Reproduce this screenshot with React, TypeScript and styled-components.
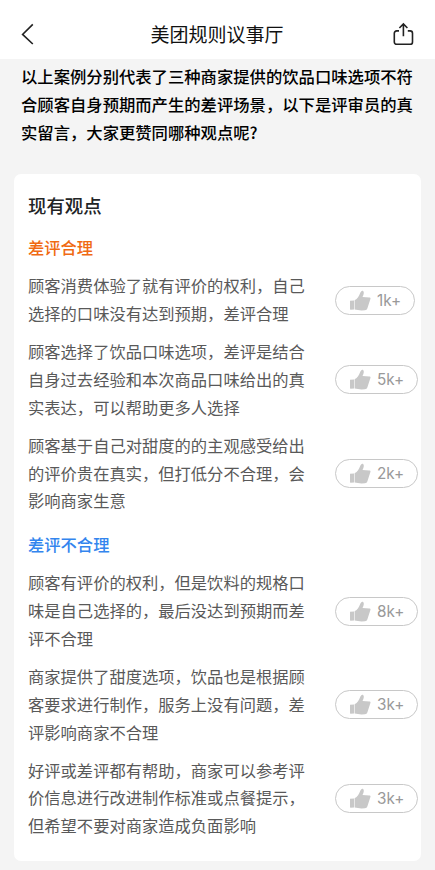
import React from "react";
import styled, { createGlobalStyle } from "styled-components";

const GlobalStyle = createGlobalStyle`
  * { box-sizing: border-box; }
  body {
    margin: 0;
    background: #f4f4f4;
    font-family: "Noto Sans CJK SC", sans-serif;
    overflow: hidden;
  }
  h1, h2, h3, p { margin: 0; }
`;

const Page = styled.div`
  width: 435px;
  height: 870px;
  background: #f4f4f4;
  overflow: hidden;
`;

const Header = styled.header`
  height: 59px;
  padding: 9px 20px 0 20px;
  background: #fff;
  display: grid;
  grid-template-columns: 24px 1fr 24px;
  align-items: center;
`;

const IconButton = styled.button`
  display: flex;
  width: 24px;
  height: 24px;
  padding: 0;
  border: 0;
  background: none;
  color: #222;
`;

const Title = styled.h1`
  padding-right: 1px;
  font-size: 19px;
  font-weight: 400;
  line-height: 28px;
  text-align: center;
  white-space: nowrap;
  color: #111;
`;

const Intro = styled.p`
  padding: 4px 0 0 21px;
  font-size: 16.33px;
  font-weight: 500;
  line-height: 27.8px;
  white-space: nowrap;
  color: #000;
`;

const Card = styled.main`
  margin: 27.6px 14px 0;
  height: 687px;
  padding: 17.4px 0 0 14px;
  border-radius: 7px;
  background: #fff;
`;

const CardTitle = styled.h2`
  font-size: 18.4px;
  font-weight: 500;
  line-height: 28px;
  color: #222426;
`;

const Group = styled.section`
  & + & { padding-top: 1.2px; }
`;

const GroupTitle = styled.h3<{ $color: string }>`
  padding: 13.6px 0 1px;
  font-size: 16.3px;
  font-weight: 500;
  line-height: 28px;
  color: ${(p) => p.$color};
`;

const Opinion = styled.div`
  display: grid;
  grid-template-columns: 307px auto;
  justify-content: start;
  align-items: center;
  margin-top: 10.3px;
`;

const OpinionText = styled.p`
  font-size: 16.3px;
  line-height: 27.8px;
  white-space: nowrap;
  color: #595959;
`;

const LikeButton = styled.button<{ $narrow: boolean }>`
  display: flex;
  align-items: center;
  width: ${(p) => (p.$narrow ? 80 : 83)}px;
  height: 29px;
  padding: 0 0 0 13px;
  gap: 6px;
  border: 1px solid #c8c8c8;
  border-radius: 15px;
  background: #fff;
  color: #999;
  font: 400 15.3px/27px Inter, sans-serif;
`;

const BackIcon = () => (
  <svg width="24" height="24" viewBox="0 0 24 24" fill="none" stroke="currentColor" strokeWidth="1.6">
    <path d="M12.8 2.4 2.6 12.4l10.2 9.6" />
  </svg>
);

const ShareIcon = () => (
  <svg width="24" height="24" viewBox="0 0 24 24" fill="none" stroke="currentColor" strokeWidth="1.6">
    <path d="M8 8.9H5.7a2.4 2.4 0 0 0-2.4 2.4v8.6a2.4 2.4 0 0 0 2.4 2.4h13.4a2.4 2.4 0 0 0 2.4-2.4v-8.6a2.4 2.4 0 0 0-2.4-2.4H16.8" />
    <path d="M12.4 14.2V2.2M8.4 6 12.4 2l4 4" />
  </svg>
);

const ThumbIcon = () => (
  <svg width="22" height="21" viewBox="0 0 22 21" fill="#c8c8c8">
    <path d="M1 10.8 5 10.4v9.2l-3.4.1a.6.6 0 0 1-.6-.6z" />
    <path d="M5.6 10.2C8.6 9 10 6 11.4 2.6 12.1.9 13.3.1 14.2 1c1.3 1.3.3 3.9-.7 6.1l6.9.3c.9 0 1.4.7 1 1.6l-3 9.3c-.4 1.2-1.2 1.9-2.4 2L12.4 20.6 5.6 19.5z" />
  </svg>
);

interface OpinionData {
  lines: string[];
  likes: string;
}

const groups: { title: string; color: string; opinions: OpinionData[] }[] = [
  {
    title: "差评合理",
    color: "#f06a12",
    opinions: [
      { lines: ["顾客消费体验了就有评价的权利，自己", "选择的口味没有达到预期，差评合理"], likes: "1k+" },
      { lines: ["顾客选择了饮品口味选项，差评是结合", "自身过去经验和本次商品口味给出的真", "实表达，可以帮助更多人选择"], likes: "5k+" },
      { lines: ["顾客基于自己对甜度的的主观感受给出", "的评价贵在真实，但打低分不合理，会", "影响商家生意"], likes: "2k+" },
    ],
  },
  {
    title: "差评不合理",
    color: "#3385ee",
    opinions: [
      { lines: ["顾客有评价的权利，但是饮料的规格口", "味是自己选择的，最后没达到预期而差", "评不合理"], likes: "8k+" },
      { lines: ["商家提供了甜度选项，饮品也是根据顾", "客要求进行制作，服务上没有问题，差", "评影响商家不合理"], likes: "3k+" },
      { lines: ["好评或差评都有帮助，商家可以参考评", "价信息进行改进制作标准或点餐提示，", "但希望不要对商家造成负面影响"], likes: "3k+" },
    ],
  },
];

const Lines = ({ lines }: { lines: string[] }) => (
  <>
    {lines.map((line, i) => (
      <React.Fragment key={line}>
        {i > 0 && <br />}
        {line}
      </React.Fragment>
    ))}
  </>
);

export default function App() {
  return (
    <>
      <GlobalStyle />
      <Page>
        <Header>
          <IconButton aria-label="返回"><BackIcon /></IconButton>
          <Title>美团规则议事厅</Title>
          <IconButton aria-label="分享"><ShareIcon /></IconButton>
        </Header>
        <Intro>
          <Lines
            lines={[
              "以上案例分别代表了三种商家提供的饮品口味选项不符",
              "合顾客自身预期而产生的差评场景，以下是评审员的真",
              "实留言，大家更赞同哪种观点呢?",
            ]}
          />
        </Intro>
        <Card>
          <CardTitle>现有观点</CardTitle>
          {groups.map((group) => (
            <Group key={group.title}>
              <GroupTitle $color={group.color}>{group.title}</GroupTitle>
              {group.opinions.map((opinion) => (
                <Opinion key={opinion.lines[0]}>
                  <OpinionText><Lines lines={opinion.lines} /></OpinionText>
                  <LikeButton $narrow={opinion.likes === "1k+"}>
                    <ThumbIcon />
                    {opinion.likes}
                  </LikeButton>
                </Opinion>
              ))}
            </Group>
          ))}
        </Card>
      </Page>
    </>
  );
}
